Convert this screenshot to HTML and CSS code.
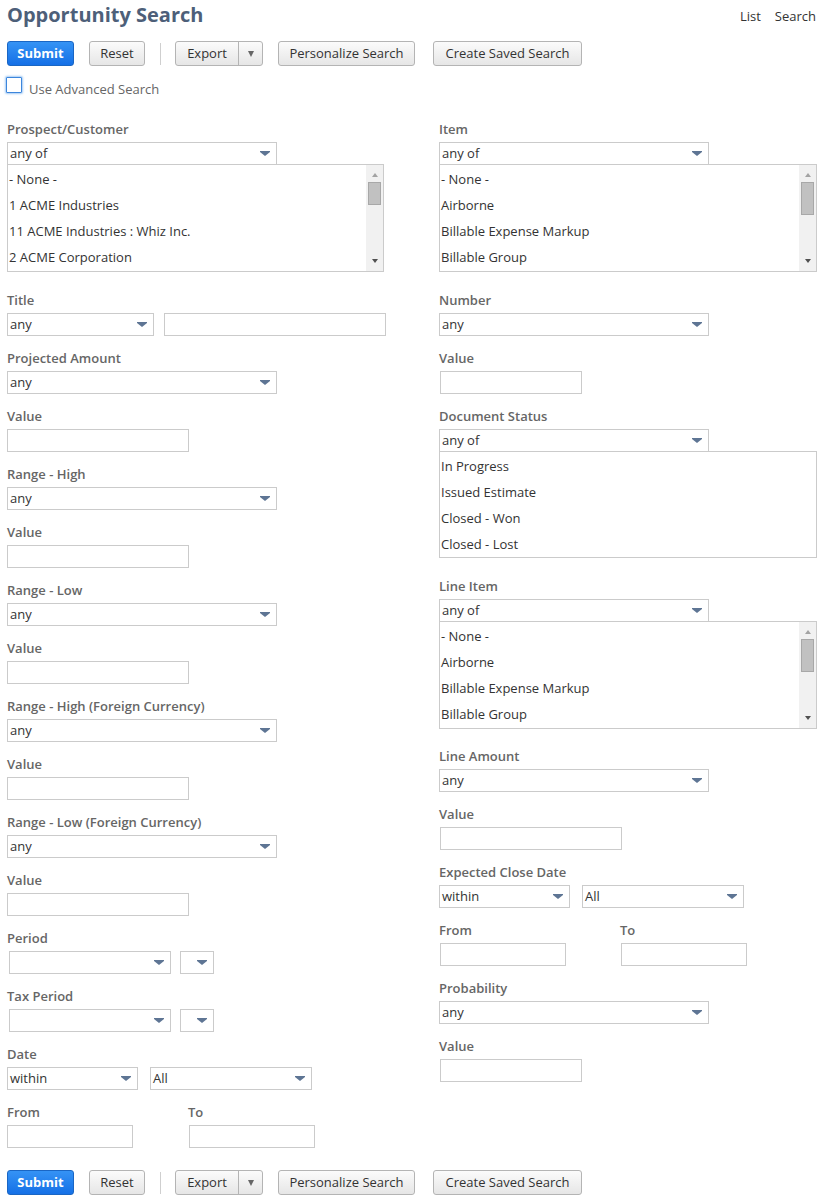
FILE: index.html
```html
<!DOCTYPE html>
<html>
<head>
<meta charset="utf-8">
<title>Opportunity Search</title>
<link rel="stylesheet" href="styles.css">
</head>
<body>
<div class="page">
  <div class="head">
    <h1>Opportunity Search</h1>
    <div class="links"><span>List</span><span>Search</span></div>
  </div>

  <div class="btnbar">
    <button class="btn submit">Submit</button>
    <button class="btn reset">Reset</button>
    <span class="sep"></span>
    <div class="btn split"><span class="split-main">Export</span><span class="split-arrow"><i></i></span></div>
    <button class="btn pers">Personalize Search</button>
    <button class="btn create">Create Saved Search</button>
  </div>

  <div class="adv"><span class="cb"></span><span class="adv-text">Use Advanced Search</span></div>

  <div class="cols">
    <div class="col">
      <div class="fld">
        <div class="lbl">Prospect/Customer</div>
        <div class="sel">any of</div>
        <div class="list">
          <div class="items">
            <div>- None -</div>
            <div>1 ACME Industries</div>
            <div>11 ACME Industries : Whiz Inc.</div>
            <div>2 ACME Corporation</div>
          </div>
          <div class="sb"><i class="up"></i><i class="thumb"></i><i class="down"></i></div>
        </div>
      </div>
      <div class="fld">
        <div class="lbl">Title</div>
        <div class="row g10"><div class="sel w147">any</div><div class="inp w222"></div></div>
      </div>
      <div class="fld"><div class="lbl">Projected Amount</div><div class="sel">any</div></div>
      <div class="fld"><div class="lbl">Value</div><div class="inp w182"></div></div>
      <div class="fld"><div class="lbl">Range - High</div><div class="sel">any</div></div>
      <div class="fld"><div class="lbl">Value</div><div class="inp w182"></div></div>
      <div class="fld"><div class="lbl">Range - Low</div><div class="sel">any</div></div>
      <div class="fld"><div class="lbl">Value</div><div class="inp w182"></div></div>
      <div class="fld"><div class="lbl">Range - High (Foreign Currency)</div><div class="sel">any</div></div>
      <div class="fld"><div class="lbl">Value</div><div class="inp w182"></div></div>
      <div class="fld"><div class="lbl">Range - Low (Foreign Currency)</div><div class="sel">any</div></div>
      <div class="fld"><div class="lbl">Value</div><div class="inp w182"></div></div>
      <div class="fld">
        <div class="lbl">Period</div>
        <div class="row g9 ind2"><div class="sel w162"></div><div class="sel w34"></div></div>
      </div>
      <div class="fld">
        <div class="lbl">Tax Period</div>
        <div class="row g9 ind2"><div class="sel w162"></div><div class="sel w34"></div></div>
      </div>
      <div class="fld">
        <div class="lbl">Date</div>
        <div class="row g12"><div class="sel w131">within</div><div class="sel w162">All</div></div>
      </div>
      <div class="fld">
        <div class="row">
          <div class="sub"><div class="lbl">From</div><div class="inp w126"></div></div>
          <div class="sub"><div class="lbl">To</div><div class="inp w126 nudge"></div></div>
        </div>
      </div>
    </div>

    <div class="col right">
      <div class="fld">
        <div class="lbl">Item</div>
        <div class="sel">any of</div>
        <div class="list wide">
          <div class="items">
            <div>- None -</div>
            <div>Airborne</div>
            <div>Billable Expense Markup</div>
            <div>Billable Group</div>
          </div>
          <div class="sb"><i class="up"></i><i class="thumb big"></i><i class="down"></i></div>
        </div>
      </div>
      <div class="fld"><div class="lbl">Number</div><div class="sel">any</div></div>
      <div class="fld"><div class="lbl">Value</div><div class="inp w142"></div></div>
      <div class="fld">
        <div class="lbl">Document Status</div>
        <div class="sel">any of</div>
        <div class="list wide short">
          <div class="items">
            <div>In Progress</div>
            <div>Issued Estimate</div>
            <div>Closed - Won</div>
            <div>Closed - Lost</div>
          </div>
        </div>
      </div>
      <div class="fld">
        <div class="lbl">Line Item</div>
        <div class="sel">any of</div>
        <div class="list wide tight">
          <div class="items">
            <div>- None -</div>
            <div>Airborne</div>
            <div>Billable Expense Markup</div>
            <div>Billable Group</div>
          </div>
          <div class="sb"><i class="up"></i><i class="thumb big"></i><i class="down"></i></div>
        </div>
      </div>
      <div class="fld"><div class="lbl">Line Amount</div><div class="sel">any</div></div>
      <div class="fld"><div class="lbl">Value</div><div class="inp w182"></div></div>
      <div class="fld">
        <div class="lbl">Expected Close Date</div>
        <div class="row g12"><div class="sel w131">within</div><div class="sel w162">All</div></div>
      </div>
      <div class="fld">
        <div class="row">
          <div class="sub"><div class="lbl">From</div><div class="inp w126"></div></div>
          <div class="sub"><div class="lbl">To</div><div class="inp w126"></div></div>
        </div>
      </div>
      <div class="fld"><div class="lbl">Probability</div><div class="sel">any</div></div>
      <div class="fld"><div class="lbl">Value</div><div class="inp w142"></div></div>
    </div>
  </div>

  <div class="btnbar bottom">
    <button class="btn submit">Submit</button>
    <button class="btn reset">Reset</button>
    <span class="sep"></span>
    <div class="btn split"><span class="split-main">Export</span><span class="split-arrow"><i></i></span></div>
    <button class="btn pers">Personalize Search</button>
    <button class="btn create">Create Saved Search</button>
  </div>
</div>
</body>
</html>
```

FILE: styles.css
```css
* { box-sizing: border-box; }

body {
  margin: 0;
  font-family: "Open Sans", "Liberation Sans", sans-serif;
  font-size: 13px;
  color: #333;
  background: #fff;
}

.page {
  padding: 0 7px 0 7px;
}

.head {
  display: flex;
  justify-content: space-between;
  align-items: flex-start;
  height: 30px;
}

h1 {
  margin: 1px 0 0;
  font-size: 20px;
  line-height: 28px;
  font-weight: 700;
  color: #4d5f79;
}

.links {
  display: flex;
  gap: 14px;
  padding-top: 6px;
  line-height: 20px;
  color: #333;
}

/* button bar */
.btnbar {
  display: flex;
  align-items: center;
  margin-top: 11px;
  height: 25px;
}

.btnbar.bottom {
  margin-top: 9px;
}

.btn {
  height: 25px;
  border: 1px solid #b4b4b4;
  border-radius: 3px;
  background: linear-gradient(#fbfbfb, #e6e6e6);
  padding: 0;
  font-family: "Open Sans", "Liberation Sans", sans-serif;
  font-size: 13px;
  line-height: 23px;
  color: #333;
  text-align: center;
}

.submit {
  width: 67px;
  background: linear-gradient(#3593f5, #1570e6);
  border-color: #1a66c4;
  color: #fff;
  font-weight: 700;
}

.reset { width: 56px; margin-left: 15px; }

.sep {
  width: 1px;
  height: 22px;
  background: #cfcfcf;
  margin-left: 15px;
}

.split {
  display: flex;
  width: 88px;
  margin-left: 14px;
}

.split-main {
  width: 63px;
  border-right: 1px solid #b4b4b4;
}

.split-arrow {
  flex: 1;
  display: flex;
  align-items: center;
  justify-content: center;
}

.split-arrow i {
  width: 0;
  height: 0;
  border-left: 3.5px solid transparent;
  border-right: 3.5px solid transparent;
  border-top: 6px solid #666;
}

.pers { width: 137px; margin-left: 15px; }
.create { width: 149px; margin-left: 18px; }

/* advanced checkbox */
.adv {
  display: flex;
  align-items: flex-start;
  margin-top: 10px;
  height: 20px;
}

.cb {
  width: 16px;
  height: 16px;
  margin: 1px 0 0 -1px;
  border: 1px solid #3d86dc;
  border-radius: 1px;
  background: #fff;
  box-shadow: 0 0 2px 1px rgba(90, 160, 235, 0.55);
}

.adv-text {
  margin-left: 7px;
  padding-top: 4px;
  line-height: 18px;
  color: #666;
}

/* columns */
.cols {
  display: grid;
  grid-template-columns: 432px 1fr;
  margin-top: 24px;
}

.fld {
  margin-bottom: 13px;
}

.lbl {
  height: 18px;
  line-height: 18px;
  margin-bottom: 4px;
  font-weight: 600;
  color: #666;
  white-space: nowrap;
}

.sel {
  position: relative;
  width: 270px;
  height: 23px;
  border: 1px solid #cbcbcb;
  padding: 0 2px;
  line-height: 21px;
  color: #333;
  background: #fff;
}

.sel::after {
  content: "";
  position: absolute;
  right: 6px;
  top: 8px;
  width: 10px;
  height: 5px;
  background: #5e7594;
  clip-path: polygon(0 0, 100% 0, 100% 20%, 50% 100%, 0 20%);
}

.inp {
  height: 23px;
  border: 1px solid #cbcbcb;
  background: #fff;
}

.right .inp { margin-left: 1px; }

.w34 { width: 34px; }
.w126 { width: 126px; }
.w131 { width: 131px; }
.w142 { width: 142px; }
.w147 { width: 147px; }
.w162 { width: 162px; }
.w182 { width: 182px; }
.w222 { width: 222px; }

.row { display: flex; }
.g9 { gap: 9px; }
.g10 { gap: 10px; }
.g12 { gap: 12px; }
.ind2 { padding-left: 2px; }

.sub { width: 181px; }
.sub .nudge { margin-left: 1px; }

/* list boxes */
.list {
  display: flex;
  width: 377px;
  height: 108px;
  margin-top: -1px;
  margin-bottom: 19px;
  border: 1px solid #cbcbcb;
  background: #fff;
}

.list.wide { width: 378px; }
.list.short { height: 107px; }
.list.tight { margin-bottom: 18px; }

.items {
  flex: 1;
  padding-left: 1px;
  padding-top: 1px;
}

.items div {
  height: 26px;
  line-height: 26px;
  white-space: nowrap;
  color: #333;
}

.sb {
  width: 17px;
  background: #f1f1f1;
  display: flex;
  flex-direction: column;
  align-items: center;
}

.sb .up {
  margin-top: 8px;
  width: 0;
  height: 0;
  border-left: 3.5px solid transparent;
  border-right: 3.5px solid transparent;
  border-bottom: 4px solid #a3a3a3;
}

.sb .thumb {
  margin-top: 5px;
  width: 13px;
  height: 23px;
  background: #c1c1c1;
  border: 1px solid #a8a8a8;
}

.sb .thumb.big { height: 33px; }

.sb .down {
  margin-top: auto;
  margin-bottom: 8px;
  width: 0;
  height: 0;
  border-left: 3.5px solid transparent;
  border-right: 3.5px solid transparent;
  border-top: 4px solid #505050;
}
```
